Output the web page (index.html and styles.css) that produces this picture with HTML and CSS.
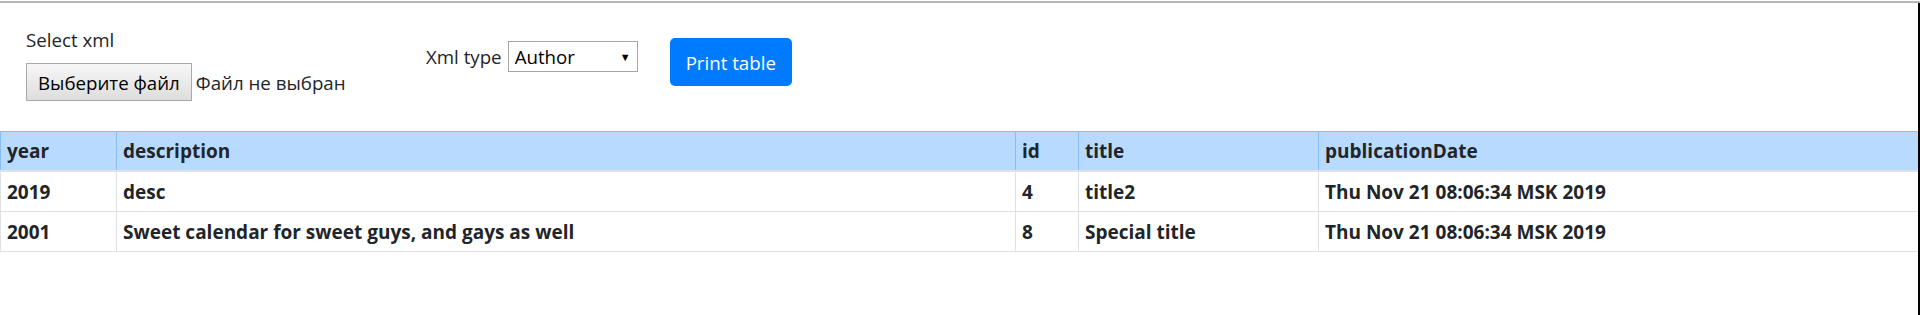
FILE: index.html
```html
<!DOCTYPE html>
<html lang="ru">
<head>
<meta charset="utf-8">
<title>XML table</title>
<link rel="stylesheet" href="styles.css">
</head>
<body>
<div class="edge"></div>
<div class="page">
  <form class="controls">
    <div class="file-group">
      <label class="lbl">Select xml</label>
      <div class="file-row">
        <span class="file-btn">Выберите файл</span>
        <span class="file-name">Файл не выбран</span>
      </div>
    </div>
    <div class="type-group">
      <span class="lbl">Xml type</span>
      <div class="select"><span>Author</span><span class="arrow">&#9660;</span></div>
    </div>
    <button type="button" class="print">Print table</button>
  </form>
  <table class="data">
    <colgroup>
      <col class="c-year"><col class="c-desc"><col class="c-id"><col class="c-title"><col class="c-date">
    </colgroup>
    <thead>
      <tr><th>year</th><th>description</th><th>id</th><th>title</th><th>publicationDate</th></tr>
    </thead>
    <tbody>
      <tr><td>2019</td><td>desc</td><td>4</td><td>title2</td><td>Thu Nov 21 08:06:34 MSK 2019</td></tr>
      <tr><td>2001</td><td>Sweet calendar for sweet guys, and gays as well</td><td>8</td><td>Special title</td><td>Thu Nov 21 08:06:34 MSK 2019</td></tr>
    </tbody>
  </table>
</div>
</body>
</html>
```
FILE: styles.css
```css
html { background: #fff; }
body {
  margin: 1px 0 0;
  border-top: 2px solid #b5b5b5;
  font-family: "Open Sans", "Noto Sans", sans-serif;
  font-size: 18.7px;
  color: #212529;
  background: #fff;
}
.edge {
  position: fixed;
  top: 3px;
  right: 0;
  bottom: 0;
  width: 2px;
  background: #000;
  z-index: 5;
}
.controls {
  display: flex;
  align-items: flex-start;
  height: 128px;
  padding-left: 26px;
  box-sizing: border-box;
  margin: 0;
}
.lbl { line-height: 30px; }
.file-group {
  width: 400px;
  padding-top: 22px;
  display: flex;
  flex-direction: column;
  align-items: flex-start;
}
.file-row {
  display: flex;
  align-items: center;
  margin-top: 8px;
}
.file-btn {
  height: 38px;
  box-sizing: border-box;
  padding: 1px 11px 0;
  line-height: 35px;
  border: 1px solid #a9a9a9;
  background: linear-gradient(#f7f7f7, #dddddd);
  color: #000;
}
.file-name { margin-left: 4px; }
.type-group {
  display: flex;
  align-items: center;
  gap: 6px;
  margin-top: 38px;
}
.select {
  width: 130px;
  height: 31px;
  box-sizing: border-box;
  border: 1px solid #a6a6a6;
  display: flex;
  align-items: center;
  justify-content: space-between;
  padding: 0 6px;
  color: #000;
}
.arrow { font-size: 11px; }
.print {
  margin: 35px 0 0 32px;
  height: 48px;
  padding: 0 16px;
  border: 0;
  border-radius: 5px;
  background: #007bff;
  color: #fff;
  font-family: inherit;
  font-size: 18.7px;
}
.data {
  width: 100%;
  border-collapse: collapse;
  table-layout: fixed;
  font-weight: 700;
  font-size: 19px;
}
.c-year { width: 116px; }
.c-desc { width: 899px; }
.c-id { width: 63px; }
.c-title { width: 240px; }
.data th, .data td {
  text-align: left;
  padding: 0 6px;
  border: 1px solid #dee2e6;
  white-space: nowrap;
}
.data th {
  background: #b8daff;
  border-color: #86bdf9;
  border-bottom: 2px solid #dee2e6;
  height: 38px;
}
.data td { height: 39px; }
```
